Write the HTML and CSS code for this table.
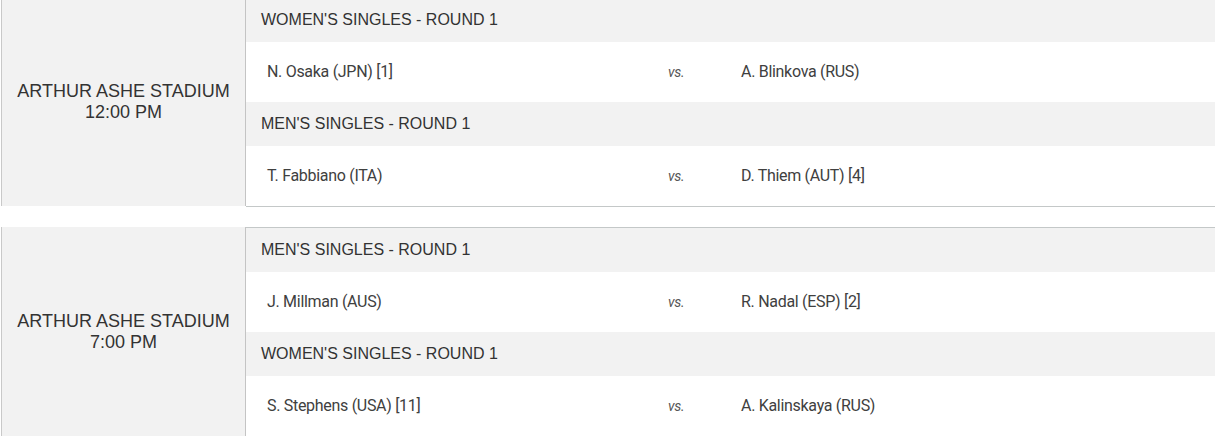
FILE: index.html
```html
<!DOCTYPE html>
<html lang="en">
<head>
<meta charset="utf-8">
<title>Schedule</title>
<link rel="stylesheet" href="styles.css">
</head>
<body>
<div class="schedule">
  <section class="court-block">
    <div class="court">ARTHUR ASHE STADIUM<br>12:00 PM</div>
    <div class="matches">
      <div class="round">WOMEN'S SINGLES - ROUND 1</div>
      <div class="match"><span class="p1">N. Osaka (JPN) [1]</span><span class="vs">vs.</span><span class="p2">A. Blinkova (RUS)</span></div>
      <div class="round">MEN'S SINGLES - ROUND 1</div>
      <div class="match"><span class="p1">T. Fabbiano (ITA)</span><span class="vs">vs.</span><span class="p2">D. Thiem (AUT) [4]</span></div>
    </div>
  </section>
  <section class="court-block">
    <div class="court">ARTHUR ASHE STADIUM<br>7:00 PM</div>
    <div class="matches">
      <div class="round">MEN'S SINGLES - ROUND 1</div>
      <div class="match"><span class="p1">J. Millman (AUS)</span><span class="vs">vs.</span><span class="p2">R. Nadal (ESP) [2]</span></div>
      <div class="round">WOMEN'S SINGLES - ROUND 1</div>
      <div class="match"><span class="p1">S. Stephens (USA) [11]</span><span class="vs">vs.</span><span class="p2">A. Kalinskaya (RUS)</span></div>
    </div>
  </section>
</div>
</body>
</html>
```
FILE: styles.css
```css
html {
  overflow: hidden;
}
body {
  margin: 0;
  background: #ffffff;
}
.schedule {
  margin: -3px 0 0 1px;
  display: flex;
  flex-direction: column;
  gap: 20px;
}
.court-block {
  display: flex;
}
.court {
  width: 243px;
  flex: none;
  margin-bottom: 1px;
  background: #f2f2f2;
  border-left: 1px solid #c9c9c9;
  border-right: 1px solid #c4c4c4;
  display: flex;
  align-items: center;
  justify-content: center;
  text-align: center;
  font-family: "Liberation Sans", Arial, sans-serif;
  font-size: 18px;
  line-height: 21px;
  color: #333333;
}
.matches {
  flex: 1;
  border-top: 1px solid #c4c8c8;
  border-bottom: 1px solid #c4c8c8;
}
.round {
  height: 44px;
  background: #f2f2f2;
  padding-left: 15px;
  display: flex;
  align-items: center;
  font-family: "Liberation Sans", Arial, sans-serif;
  font-size: 16px;
  color: #333333;
}
.match {
  height: 60px;
  background: #ffffff;
  display: grid;
  grid-template-columns: 422px 73px 1fr;
  align-content: center;
  align-items: baseline;
  padding-bottom: 2px;
  box-sizing: border-box;
  font-family: Roboto, "Liberation Sans", sans-serif;
  font-size: 16px;
  font-weight: 400;
  letter-spacing: -0.3px;
  color: #404040;
}
.p1 {
  padding-left: 21px;
}
.vs {
  font-style: italic;
  font-size: 14px;
  color: #555555;
  letter-spacing: -0.3px;
}
```
